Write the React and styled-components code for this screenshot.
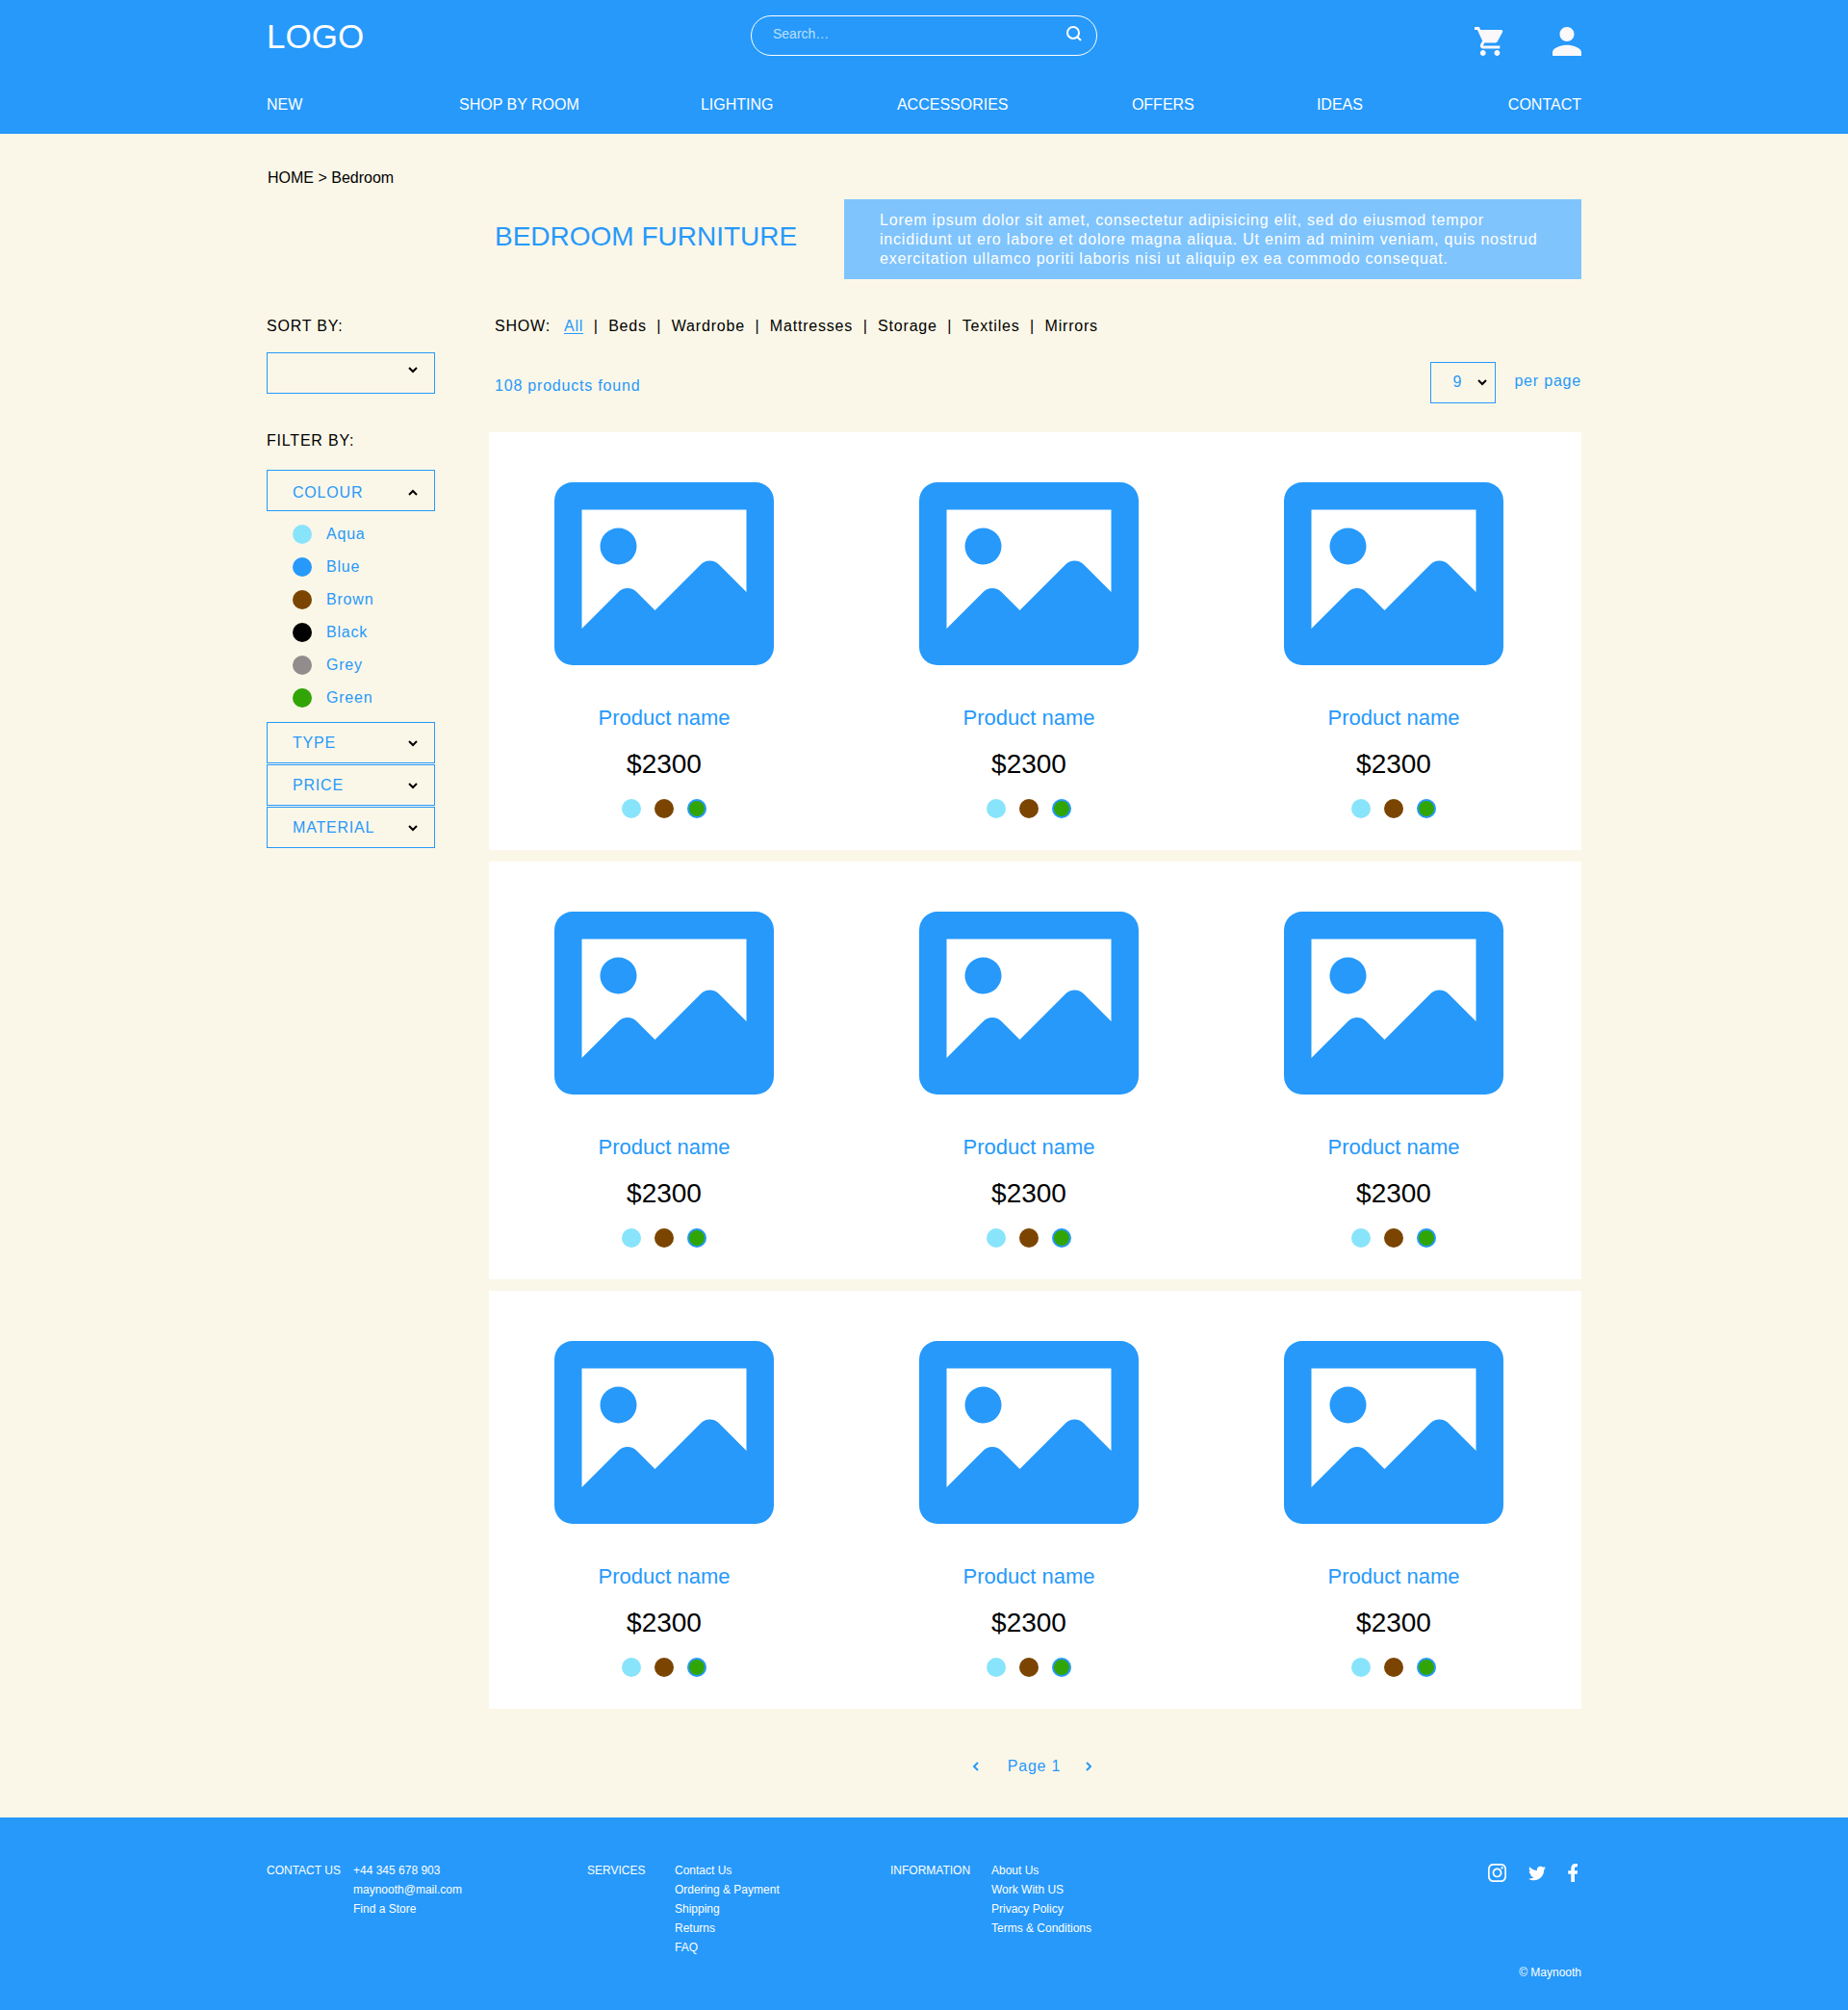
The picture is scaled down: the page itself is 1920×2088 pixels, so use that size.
import React from "react";
import styled, { createGlobalStyle, css } from "styled-components";
import { FaInstagram, FaTwitter, FaFacebookF } from "react-icons/fa";

const blue = "#2699fb";
const cream = "#fbf7e8";
const aqua = "#88e4fb";
const brown = "#7b4501";
const green = "#31a505";

const GlobalStyle = createGlobalStyle`
  *, *::before, *::after { box-sizing: border-box; }
  body {
    margin: 0;
    background: ${cream};
    color: #000;
    font: 16px/20px "Liberation Sans", Arial, Helvetica, sans-serif;
  }
  h1, h2, h3, p, ul { margin: 0; padding: 0; font-weight: 400; }
  ul { list-style: none; }
  a { color: inherit; text-decoration: none; }
  button, input, select { font: inherit; color: inherit; letter-spacing: inherit; }
  button { padding: 0; border: 0; background: none; cursor: pointer; }
  svg { display: block; }
`;

const Container = styled.div`
  max-width: 1366px;
  margin: 0 auto;
`;

/* ---------- header ---------- */

const Header = styled.header`
  background: ${blue};
  color: #fff;
  padding: 16px 0 20px;
`;

const TopBar = styled.div`
  display: grid;
  grid-template-columns: 1fr 360px 1fr;
  align-items: start;
`;

const Logo = styled.a`
  justify-self: start;
  font-size: 35px;
  line-height: 44px;
`;

const SearchForm = styled.form`
  display: flex;
  align-items: center;
  height: 42px;
  padding: 0 15px 4px 22px;
  border: 1px solid #fff;
  border-radius: 21px;
`;

const SearchInput = styled.input`
  flex: 1;
  min-width: 0;
  padding: 0;
  border: 0;
  outline: 0;
  background: none;
  font-size: 14px;
  &::placeholder { color: #bce0fd; opacity: 1; }
`;

const Account = styled.div`
  display: flex;
  justify-content: flex-end;
  gap: 51px;
  padding-top: 12px;
`;

const Nav = styled.nav`
  display: grid;
  grid-template-columns: 200fr 251fr 204fr 244fr 192fr 199fr auto;
  margin-top: 39px;
`;

/* ---------- page head ---------- */

const Breadcrumb = styled.nav`
  padding: 36px 0 0 1px;
`;

const Intro = styled.section`
  display: flex;
  align-items: flex-start;
  margin-top: 12px;
  padding-left: 237px;
`;

const Title = styled.h1`
  flex: 1;
  padding-top: 23px;
  color: ${blue};
  font-size: 28px;
  line-height: 32px;
`;

const Blurb = styled.p`
  flex: 0 1 766px;
  padding: 12px 36px 11px 37px;
  background: #7fc4fd;
  color: #fff;
  letter-spacing: 0.05em;
`;

/* ---------- sidebar ---------- */

const Layout = styled.div`
  display: grid;
  grid-template-columns: 175px 1fr;
  column-gap: 56px;
  margin-top: 39px;
  letter-spacing: 0.05em;
`;

const SortLabel = styled.label`
  display: block;
  margin-bottom: 17px;
`;

const FilterTitle = styled.h2`
  margin: 39px 0 20px;
  font-size: 16px;
`;

const outlined = css`
  width: 100%;
  height: 43px;
  border: 1px solid ${blue};
  border-radius: 0;
  background: transparent;
  color: ${blue};
`;

const SelectWrap = styled.div`
  position: relative;
  width: ${(p) => p.$width || "100%"};
  > svg {
    position: absolute;
    top: ${(p) => p.$top};
    right: ${(p) => p.$right};
    pointer-events: none;
  }
`;

const Select = styled.select`
  ${outlined}
  appearance: none;
  padding: 0 22px 2px;
`;

const FilterButton = styled.button`
  ${outlined}
  display: flex;
  justify-content: space-between;
  align-items: center;
  padding: ${(p) => (p.$open ? "4px 17px 0 26px" : "0 17px 0 26px")};
  & + & { margin-top: 1px; }
`;

const ColourList = styled.ul`
  display: flex;
  flex-direction: column;
  gap: 14px;
  padding: 14px 0 15px 27px;
`;

const ColourOption = styled.label`
  display: flex;
  align-items: center;
  gap: 15px;
  color: ${blue};
`;

const swatch = css`
  appearance: none;
  flex: none;
  width: 20px;
  height: 20px;
  margin: 0;
  border-radius: 50%;
  background: ${(p) => p.$color};
`;

const ColourBox = styled.input`
  ${swatch}
`;

const ColourRadio = styled.input`
  ${swatch}
  &:checked { border: 2px solid ${blue}; }
`;

/* ---------- product list ---------- */

const Show = styled.nav`
  display: flex;
  padding-left: 6px;
`;

const ShowLabel = styled.span`
  margin-right: 14px;
`;

const ShowLinks = styled.ul`
  display: flex;
  li { display: flex; }
  li + li::before {
    content: "|";
    width: 6px;
    margin: 0 10px;
    text-align: center;
  }
`;

const ShowLink = styled.a`
  ${(p) =>
    p.$active &&
    css`
      color: ${blue};
      text-decoration: underline 1px;
      text-underline-offset: 2px;
    `}
`;

const Toolbar = styled.div`
  display: flex;
  justify-content: space-between;
  align-items: flex-start;
  margin: 27px 0 30px;
  padding-left: 6px;
  color: ${blue};
`;

const Count = styled.p`
  padding-top: 15px;
`;

const PerPage = styled.div`
  display: flex;
  align-items: flex-start;
  gap: 19px;
  label { padding-top: 10px; }
`;

const Rows = styled.div`
  display: grid;
  gap: 12px;
  letter-spacing: normal;
`;

const ProductRow = styled.section`
  display: flex;
  justify-content: space-between;
  padding: 52px 81px 33px 68px;
  background: #fff;
`;

const Card = styled.article`
  display: flex;
  flex-direction: column;
  align-items: center;
`;

const ProductName = styled.h3`
  margin-top: 42px;
  color: ${blue};
  font-size: 22px;
  line-height: 26px;
`;

const Price = styled.p`
  margin: 19px 0 20px;
  font-size: 28px;
  line-height: 32px;
`;

const Swatches = styled.div`
  display: flex;
  gap: 14px;
`;

const Pagination = styled.nav`
  display: flex;
  justify-content: center;
  align-items: center;
  gap: 26px;
  padding: 50px 6px 43px 0;
  color: ${blue};
`;

const PageLabel = styled.span`
  padding-left: 4px;
`;

/* ---------- footer ---------- */

const Footer = styled.footer`
  background: ${blue};
  color: #fff;
  padding: 45px 0 29px;
  font-size: 12px;
`;

const FooterGrid = styled(Container)`
  display: grid;
  grid-template-columns: 333px 315px 1fr auto;
  min-height: 126px;
`;

const FooterGroup = styled.section`
  display: grid;
  grid-template-columns: ${(p) => p.$label} 1fr;
  h2 { font-size: 12px; }
`;

const FooterEnd = styled.div`
  display: flex;
  flex-direction: column;
  justify-content: space-between;
  align-items: flex-end;
`;

const Social = styled.div`
  display: flex;
  align-items: center;
  gap: 23px;
  padding: 3px 4px 0 0;
`;

const Instagram = styled(FaInstagram)`
  width: 19px;
  height: 19px;
`;
const Twitter = styled(FaTwitter)`
  width: 18px;
  height: 18px;
`;
const Facebook = styled(FaFacebookF)`
  width: 10px;
  height: 19px;
`;

/* ---------- icons ---------- */

const chevrons = {
  down: "M1 1l4 4 4-4",
  up: "M1 5l4-4 4 4",
  left: "M5 1L1 5l4 4",
  right: "M1 1l4 4-4 4",
};

function Chevron({ dir = "down", color = "#000" }) {
  const vertical = dir === "down" || dir === "up";
  return (
    <svg
      width={vertical ? 10 : 6}
      height={vertical ? 6 : 10}
      viewBox={vertical ? "0 0 10 6" : "0 0 6 10"}
      overflow="visible"
      fill="none"
      stroke={color}
      strokeWidth="2"
      aria-hidden="true"
    >
      <path d={chevrons[dir]} />
    </svg>
  );
}

const SearchIcon = () => (
  <svg width="16" height="16" viewBox="0 0 16 16" fill="none" stroke="#fff" strokeWidth="2" aria-hidden="true">
    <circle cx="7" cy="7" r="6" />
    <path d="M11 11l4 4" />
  </svg>
);

const CartIcon = () => (
  <svg width="30" height="30" viewBox="1 2 20.5 20" preserveAspectRatio="none" fill="#fbf8fa" aria-hidden="true">
    <path d="M7 18c-1.1 0-1.99.9-1.99 2S5.9 22 7 22s2-.9 2-2-.9-2-2-2zM1 2v2h2l3.6 7.59-1.35 2.45c-.16.28-.25.61-.25.96 0 1.1.9 2 2 2h12v-2H7.42c-.14 0-.25-.11-.25-.25l.03-.12.9-1.63h7.45c.75 0 1.41-.41 1.75-1.03l3.58-6.49A1.003 1.003 0 0 0 20 4H5.21l-.94-2H1zm16 16c-1.1 0-1.99.9-1.99 2s.89 2 1.99 2 2-.9 2-2-.9-2-2-2z" />
  </svg>
);

const PersonIcon = () => (
  <svg width="30" height="30" viewBox="4 4 16 16" fill="#fbf8fa" aria-hidden="true">
    <path d="M12 12c2.21 0 4-1.79 4-4s-1.79-4-4-4-4 1.79-4 4 1.79 4 4 4zm0 2c-2.67 0-8 1.34-8 4v2h16v-2c0-2.66-5.33-4-8-4z" />
  </svg>
);

const PictureIcon = () => (
  <svg width="228" height="190" viewBox="0 0 24 20" aria-hidden="true">
    <path
      fill={blue}
      fillRule="evenodd"
      d="M2 0h20a2 2 0 0 1 2 2v16a2 2 0 0 1-2 2H2a2 2 0 0 1-2-2V2a2 2 0 0 1 2-2zM3 3v13l4-4a1.414 1.414 0 0 1 2 0l2 2 5-5a1.414 1.414 0 0 1 2 0l3 3V3z"
    />
    <circle cx="7" cy="7" r="2" fill={blue} />
  </svg>
);

/* ---------- data ---------- */

const navItems = ["NEW", "SHOP BY ROOM", "LIGHTING", "ACCESSORIES", "OFFERS", "IDEAS", "CONTACT"];
const categories = ["All", "Beds", "Wardrobe", "Mattresses", "Storage", "Textiles", "Mirrors"];
const colours = [
  ["Aqua", aqua],
  ["Blue", blue],
  ["Brown", brown],
  ["Black", "#000"],
  ["Grey", "#918d8d"],
  ["Green", green],
];
const productColours = [
  ["Aqua", aqua],
  ["Brown", brown],
  ["Green", green],
];
const rows = [0, 1, 2].map((r) => [0, 1, 2].map((c) => ({ id: r * 3 + c, name: "Product name", price: "$2300" })));
const footerGroups = [
  { title: "CONTACT US", label: "90px", links: ["+44 345 678 903", "maynooth@mail.com", "Find a Store"] },
  { title: "SERVICES", label: "91px", links: ["Contact Us", "Ordering & Payment", "Shipping", "Returns", "FAQ"] },
  { title: "INFORMATION", label: "105px", links: ["About Us", "Work With US", "Privacy Policy", "Terms & Conditions"] },
];

function Product({ id, name, price }) {
  return (
    <Card>
      <PictureIcon />
      <ProductName>
        <a href="#product">{name}</a>
      </ProductName>
      <Price>{price}</Price>
      <Swatches>
        {productColours.map(([label, color]) => (
          <ColourRadio
            key={label}
            type="radio"
            name={`colour-${id}`}
            aria-label={label}
            $color={color}
            defaultChecked={label === "Green"}
          />
        ))}
      </Swatches>
    </Card>
  );
}

export default function App() {
  return (
    <>
      <GlobalStyle />
      <Header>
        <Container>
          <TopBar>
            <Logo href="#home">LOGO</Logo>
            <SearchForm role="search" onSubmit={(e) => e.preventDefault()}>
              <SearchInput type="text" placeholder="Search…" aria-label="Search" />
              <button type="submit" aria-label="Search">
                <SearchIcon />
              </button>
            </SearchForm>
            <Account>
              <a href="#cart" aria-label="Cart">
                <CartIcon />
              </a>
              <a href="#account" aria-label="Account">
                <PersonIcon />
              </a>
            </Account>
          </TopBar>
          <Nav>
            {navItems.map((item) => (
              <a key={item} href="#nav">
                {item}
              </a>
            ))}
          </Nav>
        </Container>
      </Header>

      <Container as="main">
        <Breadcrumb aria-label="Breadcrumb">
          <a href="#home">HOME</a> &gt; Bedroom
        </Breadcrumb>
        <Intro>
          <Title>BEDROOM FURNITURE</Title>
          <Blurb>
            Lorem ipsum dolor sit amet, consectetur adipisicing elit, sed do eiusmod tempor incididunt ut ero labore et
            dolore magna aliqua. Ut enim ad minim veniam, quis nostrud exercitation ullamco poriti laboris nisi ut
            aliquip ex ea commodo consequat.
          </Blurb>
        </Intro>

        <Layout>
          <aside>
            <SortLabel htmlFor="sort">SORT BY:</SortLabel>
            <SelectWrap $top="15px" $right="18px">
              <Select id="sort" defaultValue="">
                <option value="" />
              </Select>
              <Chevron />
            </SelectWrap>

            <FilterTitle>FILTER BY:</FilterTitle>
            <FilterButton type="button" $open aria-expanded="true">
              COLOUR
              <Chevron dir="up" />
            </FilterButton>
            <ColourList>
              {colours.map(([label, color]) => (
                <li key={label}>
                  <ColourOption>
                    <ColourBox type="checkbox" $color={color} />
                    {label}
                  </ColourOption>
                </li>
              ))}
            </ColourList>
            {["TYPE", "PRICE", "MATERIAL"].map((label) => (
              <FilterButton key={label} type="button" aria-expanded="false">
                {label}
                <Chevron />
              </FilterButton>
            ))}
          </aside>

          <div>
            <Show aria-label="Category">
              <ShowLabel>SHOW:</ShowLabel>
              <ShowLinks>
                {categories.map((label) => (
                  <li key={label}>
                    <ShowLink href="#category" $active={label === "All"}>
                      {label}
                    </ShowLink>
                  </li>
                ))}
              </ShowLinks>
            </Show>
            <Toolbar>
              <Count>108 products found</Count>
              <PerPage>
                <SelectWrap $width="68px" $top="18px" $right="9px">
                  <Select id="per-page" defaultValue="9">
                    <option>9</option>
                  </Select>
                  <Chevron />
                </SelectWrap>
                <label htmlFor="per-page">per page</label>
              </PerPage>
            </Toolbar>
            <Rows>
              {rows.map((items, i) => (
                <ProductRow key={i}>
                  {items.map((item) => (
                    <Product key={item.id} {...item} />
                  ))}
                </ProductRow>
              ))}
            </Rows>
            <Pagination aria-label="Pages">
              <button type="button" aria-label="Previous page">
                <Chevron dir="left" color={blue} />
              </button>
              <PageLabel>Page 1</PageLabel>
              <button type="button" aria-label="Next page">
                <Chevron dir="right" color={blue} />
              </button>
            </Pagination>
          </div>
        </Layout>
      </Container>

      <Footer>
        <FooterGrid>
          {footerGroups.map(({ title, label, links }) => (
            <FooterGroup key={title} $label={label}>
              <h2>{title}</h2>
              <ul>
                {links.map((link) => (
                  <li key={link}>
                    <a href="#footer">{link}</a>
                  </li>
                ))}
              </ul>
            </FooterGroup>
          ))}
          <FooterEnd>
            <Social>
              <a href="#instagram" aria-label="Instagram">
                <Instagram viewBox="0 32 448 448" />
              </a>
              <a href="#twitter" aria-label="Twitter">
                <Twitter />
              </a>
              <a href="#facebook" aria-label="Facebook">
                <Facebook viewBox="22 0 258 512" />
              </a>
            </Social>
            <p>© Maynooth</p>
          </FooterEnd>
        </FooterGrid>
      </Footer>
    </>
  );
}
